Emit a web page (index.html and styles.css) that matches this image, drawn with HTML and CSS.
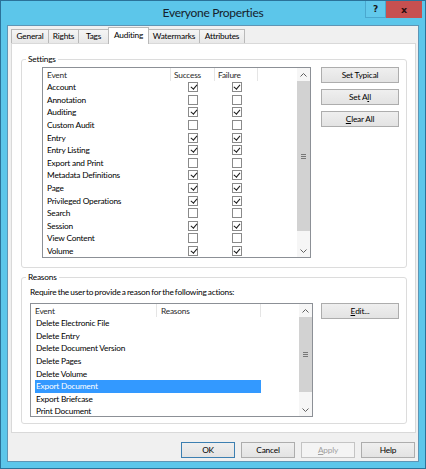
FILE: index.html
```html
<!DOCTYPE html>
<html>
<head>
<meta charset="utf-8">
<link rel="stylesheet" href="styles.css">
</head>
<body>
<div class="window">
  <div class="titlebar">
    <div class="tb-side"></div>
    <div class="title">Everyone Properties</div>
    <div class="tb-side controls">
      <span class="cbtn help">?</span>
      <span class="cbtn close">x</span>
    </div>
  </div>
  <div class="client">
    <div class="tabs">
      <div class="tab t-general">General</div>
      <div class="tab t-rights">Rights</div>
      <div class="tab t-tags">Tags</div>
      <div class="tab t-auditing active">Auditing</div>
      <div class="tab t-water">Watermarks</div>
      <div class="tab t-attr">Attributes</div>
    </div>
    <div class="panel">
      <fieldset class="group g-settings">
        <legend>Settings</legend>
        <div class="settings-body">
          <div class="list list-settings">
            <div class="list-main">
              <div class="lhead">
                <span class="s-event">Event</span><span class="s-succ">Success</span><span class="s-fail">Failure</span><span class="s-rest"></span>
              </div>
              <div class="lrow"><span class="s-event">Account</span><span class="s-succ"><i class="cb on"></i></span><span class="s-fail"><i class="cb on"></i></span></div>
              <div class="lrow"><span class="s-event">Annotation</span><span class="s-succ"><i class="cb"></i></span><span class="s-fail"><i class="cb"></i></span></div>
              <div class="lrow"><span class="s-event">Auditing</span><span class="s-succ"><i class="cb on"></i></span><span class="s-fail"><i class="cb on"></i></span></div>
              <div class="lrow"><span class="s-event">Custom Audit</span><span class="s-succ"><i class="cb"></i></span><span class="s-fail"><i class="cb"></i></span></div>
              <div class="lrow"><span class="s-event">Entry</span><span class="s-succ"><i class="cb on"></i></span><span class="s-fail"><i class="cb on"></i></span></div>
              <div class="lrow"><span class="s-event">Entry Listing</span><span class="s-succ"><i class="cb on"></i></span><span class="s-fail"><i class="cb on"></i></span></div>
              <div class="lrow"><span class="s-event">Export and Print</span><span class="s-succ"><i class="cb"></i></span><span class="s-fail"><i class="cb"></i></span></div>
              <div class="lrow"><span class="s-event">Metadata Definitions</span><span class="s-succ"><i class="cb on"></i></span><span class="s-fail"><i class="cb on"></i></span></div>
              <div class="lrow"><span class="s-event">Page</span><span class="s-succ"><i class="cb on"></i></span><span class="s-fail"><i class="cb on"></i></span></div>
              <div class="lrow"><span class="s-event">Privileged Operations</span><span class="s-succ"><i class="cb on"></i></span><span class="s-fail"><i class="cb on"></i></span></div>
              <div class="lrow"><span class="s-event">Search</span><span class="s-succ"><i class="cb"></i></span><span class="s-fail"><i class="cb"></i></span></div>
              <div class="lrow"><span class="s-event">Session</span><span class="s-succ"><i class="cb on"></i></span><span class="s-fail"><i class="cb on"></i></span></div>
              <div class="lrow"><span class="s-event">View Content</span><span class="s-succ"><i class="cb"></i></span><span class="s-fail"><i class="cb"></i></span></div>
              <div class="lrow"><span class="s-event">Volume</span><span class="s-succ"><i class="cb on"></i></span><span class="s-fail"><i class="cb on"></i></span></div>
            </div>
            <div class="sbar">
              <div class="sb-arrow sb-up"><svg width="7" height="4" viewBox="0 0 7 4"><polyline points="0.5,3.5 3.5,0.5 6.5,3.5" fill="none" stroke="#606060" stroke-width="1"/></svg></div>
              <div class="sb-thumb thumb-settings"><span class="grip"></span></div>
              <div class="sb-track"></div>
              <div class="sb-arrow sb-down"><svg width="7" height="4" viewBox="0 0 7 4"><polyline points="0.5,0.5 3.5,3.5 6.5,0.5" fill="none" stroke="#606060" stroke-width="1"/></svg></div>
            </div>
          </div>
          <div class="side-buttons">
            <div class="btn">Set Typical</div>
            <div class="btn">Set A<u>l</u>l</div>
            <div class="btn"><u>C</u>lear All</div>
          </div>
        </div>
      </fieldset>
      <fieldset class="group g-reasons">
        <legend>Reasons</legend>
        <div class="reasons-body">
          <div class="req">Require the user to provide a reason for the following actions:</div>
          <div class="reasons-row">
            <div class="list list-reasons">
              <div class="list-main">
                <div class="lhead">
                  <span class="r-event">Event</span><span class="r-reason">Reasons</span><span class="r-rest"></span>
                </div>
                <div class="rrow">Delete Electronic File</div>
                <div class="rrow">Delete Entry</div>
                <div class="rrow">Delete Document Version</div>
                <div class="rrow">Delete Pages</div>
                <div class="rrow">Delete Volume</div>
                <div class="rrow selected">Export Document</div>
                <div class="rrow">Export Briefcase</div>
                <div class="rrow">Print Document</div>
              </div>
              <div class="sbar">
                <div class="sb-arrow sb-up"><svg width="7" height="4" viewBox="0 0 7 4"><polyline points="0.5,3.5 3.5,0.5 6.5,3.5" fill="none" stroke="#606060" stroke-width="1"/></svg></div>
                <div class="sb-thumb thumb-reasons"><span class="grip"></span></div>
                <div class="sb-track"></div>
                <div class="sb-arrow sb-down"><svg width="7" height="4" viewBox="0 0 7 4"><polyline points="0.5,0.5 3.5,3.5 6.5,0.5" fill="none" stroke="#606060" stroke-width="1"/></svg></div>
              </div>
            </div>
            <div class="side-buttons">
              <div class="btn"><u>E</u>dit...</div>
            </div>
          </div>
        </div>
      </fieldset>
    </div>
    <div class="footer">
      <div class="btn fbtn default">OK</div>
      <div class="btn fbtn">Cancel</div>
      <div class="btn fbtn disabled"><u>A</u>pply</div>
      <div class="btn fbtn">Help</div>
    </div>
  </div>
</div>
</body>
</html>
```
FILE: styles.css
```css
* { box-sizing: border-box; }
html, body { margin: 0; padding: 0; }
body {
  font-family: Lato, "Noto Sans", sans-serif;
  font-size: 8.3px;
  letter-spacing: -0.2px;
  color: #000;
  background: #5cc6ea;
}
.window {
  width: 426px;
  height: 469px;
  background: #5cc6ea;
  border: 1px solid #2b7299;
  display: flex;
  flex-direction: column;
}
.titlebar {
  height: 24px;
  display: grid;
  grid-template-columns: 1fr auto 1fr;
  align-items: start;
}
.title {
  font-size: 12px;
  letter-spacing: -0.3px;
  line-height: 24px;
  color: #15212b;
}
.controls {
  display: flex;
  justify-content: flex-end;
  padding-right: 3px;
}
.cbtn {
  height: 17px;
  display: flex;
  align-items: center;
  justify-content: center;
  font-family: "DejaVu Sans", sans-serif;
  font-weight: bold;
  font-size: 9px;
  letter-spacing: 0;
  color: #1a1a1a;
}
.help {
  width: 21px;
  border: 1px solid #4aa8cf;
  border-top: none;
  background: #62c9ec;
}
.close {
  width: 36px;
  background: #c75050;
  color: #2a0e0e;
  font-size: 9.5px;
}
.client {
  flex: 1;
  margin: 0 6px 6px 6px;
  border: 1px solid #5e95b5;
  background: #f0f0f0;
  padding: 3px 2px 0 3px;
  display: flex;
  flex-direction: column;
}
.tabs {
  height: 14px;
  display: flex;
  align-items: flex-end;
  position: relative;
  z-index: 1;
}
.tab {
  height: 14px;
  border: 1px solid #b9b9b9;
  border-bottom: none;
  background: linear-gradient(#f5f5f5, #e8e8e8);
  display: flex;
  align-items: center;
  justify-content: center;
  margin-left: -1px;
  line-height: 1;
}
.tab:first-child { margin-left: 0; }
.tab.active {
  height: 17px;
  margin-bottom: -1px;
  background: #fff;
  padding-bottom: 2px;
}
.t-general { width: 38px; }
.t-rights { width: 31px; }
.t-tags { width: 31px; }
.t-auditing { width: 41px; }
.t-water { width: 52px; }
.t-attr { width: 46px; }
.panel {
  height: 390px;
  background: #fff;
  border: 1px solid #d9d9d9;
  padding: 9px 8px 0 9px;
}
.group {
  margin: 0;
  padding: 0;
  border: 1px solid #dcdcdc;
  border-radius: 3px;
  min-width: 0;
}
.group legend {
  margin-left: 4px;
  padding: 0 2px;
  line-height: 12px;
}
.g-reasons { margin-top: 3px; }
.settings-body {
  display: flex;
  padding: 2px 7px 9px 20px;
}
.list {
  display: flex;
  border: 1px solid #8c9096;
  background: #fff;
  overflow: hidden;
}
.list-settings { width: 270px; height: 191px; }
.list-main { flex: 1; overflow: hidden; }
.lhead {
  height: 13px;
  display: flex;
  align-items: stretch;
  color: #2a2a2a;
}
.lhead span {
  border-right: 1px solid #e5e5e5;
  display: flex;
  align-items: center;
}
.lhead span:last-child { border-right: none; }
.s-event { width: 128px; padding-left: 4px; flex: none; }
.s-succ { width: 44px; flex: none; }
.s-fail { width: 43px; flex: none; }
.s-rest { flex: 1; }
.lhead .s-succ, .lhead .s-fail { padding-left: 3px; }
.lrow {
  height: 12.6px;
  display: flex;
  align-items: center;
}
.lrow .s-succ, .lrow .s-fail {
  display: flex;
  justify-content: center;
}
.cb {
  display: block;
  width: 10px;
  height: 10px;
  border: 1px solid #8a8a8a;
  background: #fff;
  position: relative;
}
.cb.on::after {
  content: "";
  position: absolute;
  left: 2.5px;
  top: 0px;
  width: 2.5px;
  height: 5px;
  border: solid #1a1a1a;
  border-width: 0 1.7px 1.7px 0;
  transform: rotate(40deg);
}
.sbar {
  width: 13px;
  flex: none;
  display: flex;
  flex-direction: column;
  background: #f6f6f6;
}
.sb-arrow {
  height: 13px;
  display: flex;
  align-items: center;
  justify-content: center;
  flex: none;
}
.sb-thumb {
  background: #d2d2d2;
  display: flex;
  align-items: center;
  justify-content: center;
  flex: none;
}
.thumb-settings { height: 150px; }
.thumb-reasons { height: 75px; }
.sb-track { flex: 1; }
.grip {
  width: 5px;
  height: 5px;
  border-top: 1px solid #777;
  border-bottom: 1px solid #777;
  background: linear-gradient(transparent 1px, #777 1px, #777 2px, transparent 2px);
}
.side-buttons {
  display: flex;
  flex-direction: column;
  gap: 6px;
  margin-left: 10px;
}
.btn {
  width: 78px;
  height: 16px;
  border: 1px solid #adadad;
  background: linear-gradient(#efefef, #e3e3e3);
  display: flex;
  align-items: center;
  justify-content: center;
}
.reasons-body {
  padding: 3px 7px 6px 8px;
}
.req {
  line-height: 13px;
  margin-bottom: 4px;
  word-spacing: -0.7px;
}
.reasons-row {
  display: flex;
}
.reasons-row .side-buttons { margin-left: 8px; }
.list-reasons { width: 283px; height: 114px; }
.r-event { width: 126px; padding-left: 4px; flex: none; }
.r-reason { width: 104px; padding-left: 4px; flex: none; }
.r-rest { flex: 1; }
.rrow {
  height: 12.6px;
  width: 226px;
  margin-left: 4px;
  padding-left: 1px;
  display: flex;
  align-items: center;
}
.rrow.selected {
  background: #3399ff;
  color: #fff;
}
.footer {
  flex: 1;
  display: flex;
  justify-content: flex-end;
  align-items: flex-start;
  gap: 6px;
  padding: 9px 1px 0 0;
}
.fbtn { width: 54px; }
.fbtn.default { border-color: #3c7fb1; }
.fbtn.disabled {
  color: #a0a0a0;
  border-color: #c4c4c4;
  background: #f4f4f4;
}
```
